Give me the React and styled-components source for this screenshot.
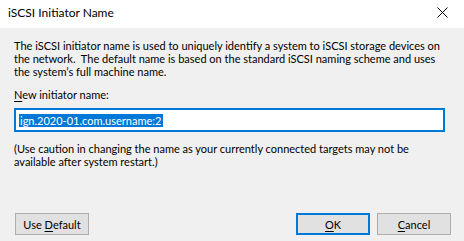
import React from "react";
import styled, { createGlobalStyle } from "styled-components";

const GlobalStyle = createGlobalStyle`
  html, body {
    margin: 0;
    padding: 0;
    background: #f0f0f0;
  }
  body {
    font-family: Lato, "Liberation Sans", sans-serif;
    font-size: 11px;
    color: #000;
  }
`;

const Window = styled.div`
  width: 464px;
  height: 241px;
  display: flex;
  flex-direction: column;
  background: #f0f0f0;
  overflow: hidden;
`;

const TitleBar = styled.div`
  height: 28px;
  flex: 0 0 28px;
  background: #ffffff;
  display: flex;
  align-items: center;
  justify-content: space-between;
  padding: 0 8px 0 8px;
  box-sizing: border-box;
`;

const Title = styled.span`
  font-size: 12px;
  line-height: 14px;
  margin-top: -3px;
`;

const CloseButton = styled.div`
  width: 24px;
  height: 20px;
  display: flex;
  align-items: center;
  justify-content: center;
  margin-top: -4px;
  margin-right: 2px;
`;

const Body = styled.div`
  flex: 1;
  display: flex;
  flex-direction: column;
  padding: 11px 13px 6px 14px;
`;

const Text = styled.p`
  margin: 0 0 ${({ $gap }) => $gap || 0}px 0;
  font-size: 11px;
  line-height: 13px;
  white-space: nowrap;
`;

const Key = styled.u`
  text-decoration-thickness: 1px;
  text-underline-offset: 2px;
`;

const Input = styled.div`
  height: 24px;
  box-sizing: border-box;
  margin-right: 6px;
  border: 2px solid #0078d7;
  background: #ffffff;
  display: flex;
  align-items: center;
  padding-left: 3px;
  margin-bottom: 10px;
`;

const Selected = styled.span`
  background: #0078d7;
  color: #ffffff;
  height: 13px;
  line-height: 13px;
  font-size: 11px;
  padding: 0 2px 0 1px;
`;

const Spacer = styled.div`
  flex: 1;
`;

const ButtonRow = styled.div`
  display: flex;
  justify-content: space-between;
  align-items: center;
  padding-left: 1px;
`;

const ButtonGroup = styled.div`
  display: flex;
  gap: 7px;
`;

const Button = styled.div`
  width: 74px;
  height: 22px;
  box-sizing: border-box;
  background: #e1e1e1;
  border: ${({ $default }) => ($default ? "2px solid #0078d7" : "1px solid #adadad")};
  display: flex;
  align-items: center;
  justify-content: center;
  font-size: 11px;
`;

const CloseIcon = () => (
  <svg width="11" height="11" viewBox="0 0 11 11">
    <path d="M0.5 0.5 L10.5 10.5 M10.5 0.5 L0.5 10.5" stroke="#000" strokeWidth="1" fill="none" />
  </svg>
);

export default function App() {
  return (
    <>
      <GlobalStyle />
      <Window>
        <TitleBar>
          <Title>iSCSI Initiator Name</Title>
          <CloseButton>
            <CloseIcon />
          </CloseButton>
        </TitleBar>
        <Body>
          <Text $gap={10}>
            The iSCSI initiator name is used to uniquely identify a system to iSCSI storage devices on
            <br />
            the network.&nbsp; The default name is based on the standard iSCSI naming scheme and uses
            <br />
            the system’s full machine name.
          </Text>
          <Text $gap={7}>
            <Key>N</Key>ew initiator name:
          </Text>
          <Input>
            <Selected>ign.2020-01.com.username:2</Selected>
          </Input>
          <Text>
            (Use caution in changing the name as your currently connected targets may not be
            <br />
            available after system restart.)
          </Text>
          <Spacer />
          <ButtonRow>
            <Button>
              Use&nbsp;<Key>D</Key>efault
            </Button>
            <ButtonGroup>
              <Button $default>
                <Key>O</Key>K
              </Button>
              <Button>
                <Key>C</Key>ancel
              </Button>
            </ButtonGroup>
          </ButtonRow>
        </Body>
      </Window>
    </>
  );
}
